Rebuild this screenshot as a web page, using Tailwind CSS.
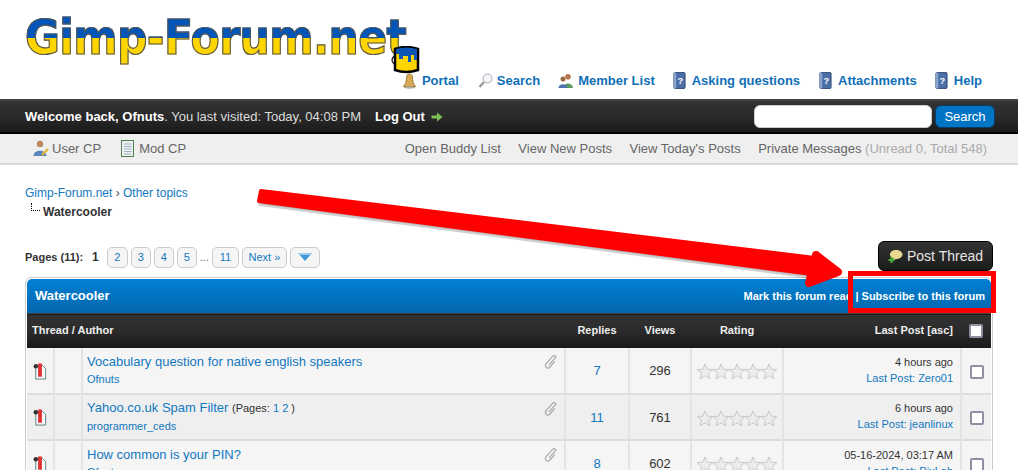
<!DOCTYPE html>
<html lang="en">
<head>
  <meta charset="UTF-8" />
  <meta name="viewport" content="width=device-width, initial-scale=1.0" />
  <title>Watercooler - Gimp-Forum.net</title>
  <script src="https://cdn.jsdelivr.net/npm/@tailwindcss/browser@4"></script>
</head>
<body class="bg-white">
  <!-- shared icons -->
  <svg class="hidden">
    <symbol id="book" viewBox="0 0 14 18">
      <rect x="1" y="0.5" width="12" height="17" rx="1" fill="#4c6fa8" stroke="#2c4470"/>
      <rect x="1" y="0.5" width="2.5" height="17" fill="#8aa3cc"/>
      <text x="8" y="13" font-size="10" font-weight="700" fill="#fff" text-anchor="middle" font-family="Liberation Sans">?</text>
    </symbol>
    <symbol id="stars" viewBox="0 0 80 17">
      <path d="M8 1 10.200 6.200 15.800 6.600 11.500 10.200 12.900 15.800 8 12.800 3.100 15.800 4.500 10.200 0.200 6.600 5.800 6.200Z" fill="#ececec" stroke="#c9c9c9"/>
      <path d="M24 1 26.200 6.200 31.800 6.600 27.500 10.200 28.900 15.800 24 12.800 19.100 15.800 20.500 10.200 16.200 6.600 21.800 6.200Z" fill="#ececec" stroke="#c9c9c9"/>
      <path d="M40 1 42.200 6.200 47.800 6.600 43.500 10.200 44.900 15.800 40 12.800 35.100 15.800 36.500 10.200 32.200 6.600 37.800 6.200Z" fill="#ececec" stroke="#c9c9c9"/>
      <path d="M56 1 58.200 6.200 63.800 6.600 59.500 10.200 60.900 15.800 56 12.800 51.100 15.800 52.500 10.200 48.200 6.600 53.800 6.200Z" fill="#ececec" stroke="#c9c9c9"/>
      <path d="M72 1 74.200 6.200 79.800 6.600 75.500 10.200 76.900 15.800 72 12.800 67.100 15.800 68.500 10.200 64.200 6.600 69.800 6.200Z" fill="#ececec" stroke="#c9c9c9"/>
    </symbol>
    <symbol id="clip" viewBox="0 0 16 16">
      <g transform="rotate(42 8 8)">
        <path d="M10.500 5V12.500C10.500 14 9.500 15.200 8 15.200 6.500 15.200 5.500 14 5.500 12.500V2.800C5.500 1.600 6.300 0.800 7.500 0.800 8.700 0.800 8.500 1.600 8.500 2.800V11.500" fill="none" stroke="#a8a8a8" stroke-width="1.200"/>
      </g>
    </symbol>
    <symbol id="threadicon" viewBox="0 0 14 18">
      <path d="M2.500 2.500H9.500L13 6V17H2.500Z" fill="#f4f8f8" stroke="#5f7f7f"/>
      <rect x="5" y="0.500" width="4" height="14" fill="#e03030"/>
      <circle cx="2.600" cy="3.500" r="2.400" fill="#333"/>
    </symbol>
  </svg>

  <div class="relative h-[470px] w-[1018px] overflow-hidden font-['Liberation_Sans',Arial,sans-serif] text-[13px] text-[#333]">
    <!-- logo + top links -->
    <header class="relative h-[99px] px-[25px]">
      <div class="pt-[7px] font-['DejaVu_Sans',sans-serif] text-[48px] leading-[60px] font-bold tracking-[-0.75px] whitespace-nowrap">
        <span class="inline-block origin-left scale-x-[0.888] bg-[linear-gradient(to_bottom,#0056b8_0,#0056b8_31px,#ffd500_31px,#ffd500_100%)] bg-clip-text text-transparent [-webkit-text-stroke:1.2px_#555]">Gimp-Forum.net</span>
      </div>
      <svg class="absolute top-[46px] left-[391px]" width="29" height="28" viewBox="0 0 29 28">
        <ellipse cx="7" cy="14" rx="6" ry="5" fill="none" stroke="#111" stroke-width="1.200"/>
        <path d="M4 3 Q15 -1 27 3 V24 Q15 28 4 24Z" fill="#ffd500" stroke="#000" stroke-width="2.500"/>
        <path d="M5 3 Q15 0 26 3 V14 H23 V9 H20 V16 H17 V10 H12 V13 H8 V8 H5Z" fill="#0d55b5"/>
      </svg>
      <nav class="absolute top-[71px] right-[36px] flex items-center text-[13px] font-bold text-[#0f6fb8]">
        <a class="flex items-center gap-[5px]">
          <svg width="15" height="16" viewBox="0 0 15 16"><path d="M7.500 1C4.500 1 4.500 4 4.200 8 4 11 2 12 1.500 13.500H13.500C13 12 11 11 10.800 8 10.500 4 10.500 1 7.500 1Z" fill="#d9a850" stroke="#9d7a3c"/><ellipse cx="7.500" cy="14.500" rx="6" ry="1.200" fill="#b8b09a"/></svg>
          Portal
        </a>
        <a class="ml-[19px] flex items-center gap-[4px]">
          <svg width="15" height="16" viewBox="0 0 15 16"><circle cx="9.500" cy="5.500" r="4.500" fill="#f2f6fa" stroke="#a7abb0"/><path d="M6 9 1.500 14" stroke="#9a9a9a" stroke-width="2.200"/></svg>
          Search
        </a>
        <a class="ml-[18px] flex items-center gap-[4px]">
          <svg width="16" height="16" viewBox="0 0 16 16"><circle cx="10" cy="3.800" r="2.800" fill="#b9764a"/><path d="M5.500 15C5.500 9 14.500 9 15 15Z" fill="#5a9a5a"/><circle cx="5" cy="6" r="2.500" fill="#9b6a45"/><path d="M0.500 15C0.500 10 9 10 9.500 15Z" fill="#4d72b0"/></svg>
          Member List
        </a>
        <a class="ml-[18px] flex items-center gap-[6px]"><svg width="13" height="17"><use href="#book"/></svg>Asking questions</a>
        <a class="ml-[19px] flex items-center gap-[6px]"><svg width="13" height="17"><use href="#book"/></svg>Attachments</a>
        <a class="ml-[18px] flex items-center gap-[6px]"><svg width="13" height="17"><use href="#book"/></svg>Help</a>
      </nav>
    </header>

    <!-- welcome bar -->
    <div class="flex h-[35px] items-center justify-between border-t-2 border-b-2 border-t-[#3f4544] border-b-black bg-[linear-gradient(to_bottom,#333333,#2a2a2a_50%,#1a1a1a)] pr-[23px] pl-[25px] text-[13px] text-[#ddd]">
      <div class="flex items-center">
        <span><b class="text-white">Welcome back, Ofnuts</b>. You last visited: Today, 04:08 PM</span>
        <b class="ml-[14px] text-white">Log Out</b>
        <svg class="ml-[6px]" width="12" height="10" viewBox="0 0 12 10"><path d="M0.500 3.500H6V0.500L11.500 5 6 9.500V6.500H0.500Z" fill="#7cbf55"/></svg>
      </div>
      <div class="flex items-center gap-[3px]">
        <div class="h-[23px] w-[178px] rounded-[6px] border border-[#ccc] bg-white"></div>
        <button class="h-[23px] w-[60px] rounded-[6px] border border-[#0a3c66] bg-[#0274c4] text-[13px] text-white">Search</button>
      </div>
    </div>

    <!-- user panel -->
    <div class="flex h-[31px] items-center justify-between border-b-2 border-b-[#d8d8d8] bg-[#efefef] pr-[31px] pl-[33px] text-[13px] text-[#666]">
      <div class="flex items-center gap-[19px]">
        <span class="flex items-center gap-[3px]">
          <svg width="16" height="17" viewBox="0 0 16 17"><circle cx="7" cy="4" r="3.200" fill="#b98a60"/><path d="M0.500 16C0.500 9 13 9 13.500 16Z" fill="#5b84c0"/><path d="M9 15 15 9" stroke="#e6b82e" stroke-width="2.200"/></svg>
          User CP
        </span>
        <span class="flex items-center gap-[4px]">
          <svg width="15" height="17" viewBox="0 0 15 17"><rect x="1.500" y="0.500" width="12" height="16" fill="#eef3f1" stroke="#4f8055"/><path d="M4 4H11.500M4 6.500H11.500M4 9H11.500M4 11.500H11.500M4 14H11.500" stroke="#9fb0c4"/></svg>
          Mod CP
        </span>
      </div>
      <div class="flex items-center gap-[17.500px]">
        <span>Open Buddy List</span>
        <span>View New Posts</span>
        <span>View Today's Posts</span>
        <span>Private Messages <span class="text-[#aaa]">(Unread 0, Total 548)</span></span>
      </div>
    </div>

    <main class="px-[25px]">
      <!-- breadcrumb -->
      <div class="pt-[20px] text-[12px] leading-[17px] text-[#1278c0]">
        <div>Gimp-Forum.net <span class="text-[#555]">›</span> Other topics</div>
        <div class="mt-[2px] flex">
          <span class="mt-[-1px] ml-[6px] h-[8px] w-[9px] border-b border-l border-dotted border-black"></span>
          <b class="ml-[3px] text-[#333]">Watercooler</b>
        </div>
      </div>

      <!-- pagination + new thread -->
      <div class="mt-[20px] flex h-[30px] items-center justify-between">
        <div class="mt-[2px] flex items-center text-[11px] text-[#333]">
          <b>Pages (11):</b>
          <b class="mr-[8px] ml-[9px] text-[12px]">1</b>
          <span class="mr-[3px] flex h-[21px] w-[21px] items-center justify-center rounded-[5px] border border-[#ccc] bg-[#f5f5f5] text-[11px] text-[#1278c0]">2</span>
          <span class="mr-[3px] flex h-[21px] w-[20px] items-center justify-center rounded-[5px] border border-[#ccc] bg-[#f5f5f5] text-[11px] text-[#1278c0]">3</span>
          <span class="mr-[3px] flex h-[21px] w-[20px] items-center justify-center rounded-[5px] border border-[#ccc] bg-[#f5f5f5] text-[11px] text-[#1278c0]">4</span>
          <span class="flex h-[21px] w-[20px] items-center justify-center rounded-[5px] border border-[#ccc] bg-[#f5f5f5] text-[11px] text-[#1278c0]">5</span>
          <span class="mx-[3px] text-[#666]">...</span>
          <span class="mr-[3px] flex h-[21px] w-[27px] items-center justify-center rounded-[5px] border border-[#ccc] bg-[#f5f5f5] text-[11px] text-[#1278c0]">11</span>
          <span class="mr-[3px] flex h-[21px] w-[45px] items-center justify-center rounded-[5px] border border-[#ccc] bg-[#f5f5f5] text-[11px] text-[#1278c0]">Next »</span>
          <span class="flex h-[21px] w-[30px] items-center justify-center rounded-[5px] border border-[#ccc] bg-[#f5f5f5]">
            <svg width="14" height="8" viewBox="0 0 14 8"><path d="M0 0H14L7 8Z" fill="#3f97d8"/><path d="M0 0H14L12.500 2H1.500Z" fill="#9ccbec"/></svg>
          </span>
        </div>
        <div class="flex h-[30px] w-[115px] items-center justify-center gap-[4px] rounded-[6px] border border-black bg-[linear-gradient(to_bottom,#333333,#1c1c1c)] text-[14px] text-[#e6e6e6]">
          <svg width="15" height="15" viewBox="0 0 15 15"><path d="M8 1C11.500 1 14.500 3 14.500 5.500S11.500 10 8 10L5 11.500 5.500 9.500C3.500 9 2 7.500 2 5.500 2 3 4.500 1 8 1Z" fill="#e8d890"/><path d="M3.500 8V14M0.500 11H6.500" stroke="#4caf3a" stroke-width="2"/></svg>
          Post Thread
        </div>
      </div>

      <!-- thread list -->
      <div class="mt-[6px] rounded-t-[6px] border border-[#ccc] bg-white p-px">
        <div class="flex h-[34px] items-center justify-between rounded-t-[5px] bg-[linear-gradient(to_bottom,#0280d4,#0267ad)] pr-[6px] pl-[8px] text-white">
          <b class="text-[13px]">Watercooler</b>
          <b class="text-[11px]">Mark this forum read | Subscribe to this forum</b>
        </div>
        <table class="w-full table-fixed border-collapse text-[12px]">
          <colgroup>
            <col class="w-[27px]" /><col class="w-[28px]" /><col class="w-[483px]" /><col class="w-[64px]" /><col class="w-[62px]" /><col class="w-[92px]" /><col class="w-[178px]" /><col />
          </colgroup>
          <thead>
            <tr class="h-[34px] border-t border-t-[#444] bg-[linear-gradient(to_bottom,#333333,#2a2a2a_50%,#1a1a1a)] text-[11px] font-bold text-[#eee]">
              <th colspan="3" class="pb-[2px] pl-[5px] text-left">Thread / Author</th>
              <th class="pb-[2px] text-center">Replies</th>
              <th class="pb-[2px] text-center">Views</th>
              <th class="pb-[2px] text-center">Rating</th>
              <th class="pr-[8px] pb-[2px] text-right">Last Post [asc]</th>
              <th><span class="mx-auto block h-[14px] w-[14px] rounded-[2px] border-2 border-[#8f8fa3] bg-white"></span></th>
            </tr>
          </thead>
          <tbody>
            <tr class="h-[46px] border-b-2 border-b-[#ddd] bg-[#f5f5f5]">
              <td class="border-r-2 border-r-[#e4e4e4] pt-[2px] pl-[6px]"><svg class="block" width="14" height="17"><use href="#threadicon"/></svg></td>
              <td class="border-r-2 border-r-[#e4e4e4]"></td>
              <td class="relative border-r-2 border-r-[#e4e4e4] pl-[4px] leading-[17px] text-[#1278c0]">
                <div class="text-[13px]">Vocabulary question for native english speakers</div>
                <div class="mt-[1px] text-[11px]">Ofnuts</div>
                <svg class="absolute top-[6px] right-[5px]" width="16" height="16"><use href="#clip"/></svg>
              </td>
              <td class="border-r-2 border-r-[#e4e4e4] pt-[2px] text-center text-[13px] text-[#1278c0]">7</td>
              <td class="border-r-2 border-r-[#e4e4e4] pt-[2px] text-center text-[13px]">296</td>
              <td class="border-r-2 border-r-[#e4e4e4] pt-[3px]"><svg class="mx-auto block" width="80" height="17"><use href="#stars"/></svg></td>
              <td class="border-r-2 border-r-[#e4e4e4] pr-[7px] pb-[1px] text-right text-[11px] leading-[16px]"><div>4 hours ago</div><div class="text-[#1278c0]">Last Post: Zero01</div></td>
              <td class="pt-[3px]"><span class="mx-auto block h-[14px] w-[14px] rounded-[2px] border-2 border-[#8f8fa3] bg-white"></span></td>
            </tr>
            <tr class="h-[46px] border-b-2 border-b-[#ddd] bg-[#efefef]">
              <td class="border-r-2 border-r-[#e4e4e4] pt-[2px] pl-[6px]"><svg class="block" width="14" height="17"><use href="#threadicon"/></svg></td>
              <td class="border-r-2 border-r-[#e4e4e4]"></td>
              <td class="relative border-r-2 border-r-[#e4e4e4] pl-[4px] leading-[17px] text-[#1278c0]">
                <div class="text-[13px]">Yahoo.co.uk Spam Filter <span class="text-[11px] text-[#333]">(Pages: <span class="text-[#1278c0]">1 2</span> )</span></div>
                <div class="mt-[1px] text-[11px]">programmer_ceds</div>
                <svg class="absolute top-[6px] right-[5px]" width="16" height="16"><use href="#clip"/></svg>
              </td>
              <td class="border-r-2 border-r-[#e4e4e4] pt-[2px] text-center text-[13px] text-[#1278c0]">11</td>
              <td class="border-r-2 border-r-[#e4e4e4] pt-[2px] text-center text-[13px]">761</td>
              <td class="border-r-2 border-r-[#e4e4e4] pt-[3px]"><svg class="mx-auto block" width="80" height="17"><use href="#stars"/></svg></td>
              <td class="border-r-2 border-r-[#e4e4e4] pr-[7px] pb-[1px] text-right text-[11px] leading-[16px]"><div>6 hours ago</div><div class="text-[#1278c0]">Last Post: jeanlinux</div></td>
              <td class="pt-[3px]"><span class="mx-auto block h-[14px] w-[14px] rounded-[2px] border-2 border-[#8f8fa3] bg-white"></span></td>
            </tr>
            <tr class="h-[46px] bg-[#f5f5f5]">
              <td class="border-r-2 border-r-[#e4e4e4] pt-[2px] pl-[6px]"><svg class="block" width="14" height="17"><use href="#threadicon"/></svg></td>
              <td class="border-r-2 border-r-[#e4e4e4]"></td>
              <td class="relative border-r-2 border-r-[#e4e4e4] pl-[4px] leading-[17px] text-[#1278c0]">
                <div class="text-[13px]">How common is your PIN?</div>
                <div class="mt-[1px] text-[11px]">Ofnuts</div>
                <svg class="absolute top-[6px] right-[5px]" width="16" height="16"><use href="#clip"/></svg>
              </td>
              <td class="border-r-2 border-r-[#e4e4e4] pt-[2px] text-center text-[13px] text-[#1278c0]">8</td>
              <td class="border-r-2 border-r-[#e4e4e4] pt-[2px] text-center text-[13px]">602</td>
              <td class="border-r-2 border-r-[#e4e4e4] pt-[3px]"><svg class="mx-auto block" width="80" height="17"><use href="#stars"/></svg></td>
              <td class="border-r-2 border-r-[#e4e4e4] pr-[7px] pb-[1px] text-right text-[11px] leading-[16px]"><div>05-16-2024, 03:17 AM</div><div class="text-[#1278c0]">Last Post: PixLab</div></td>
              <td class="pt-[3px]"><span class="mx-auto block h-[14px] w-[14px] rounded-[2px] border-2 border-[#8f8fa3] bg-white"></span></td>
            </tr>
          </tbody>
        </table>
      </div>
    </main>

    <!-- red annotation drawn over the page -->
    <svg class="pointer-events-none absolute top-0 left-0" width="1018" height="470" viewBox="0 0 1018 470">
      <path d="M261 191 815 258 812 274 259 201Z" fill="#777" fill-opacity="0.35" stroke="#777" stroke-opacity="0.35" stroke-width="4" stroke-linejoin="round" transform="translate(1 3)"/>
      <path d="M261 191 815 258 812 274 259 201Z" fill="#f00" stroke="#f00" stroke-width="4" stroke-linejoin="round"/>
      <path d="M816 255 838 272 809 283Z" fill="#f00" stroke="#f00" stroke-width="8" stroke-linejoin="round"/>
      <rect x="850.500" y="273.500" width="143" height="37" fill="none" stroke="#f00" stroke-width="5"/>
    </svg>
  </div>
</body>
</html>
